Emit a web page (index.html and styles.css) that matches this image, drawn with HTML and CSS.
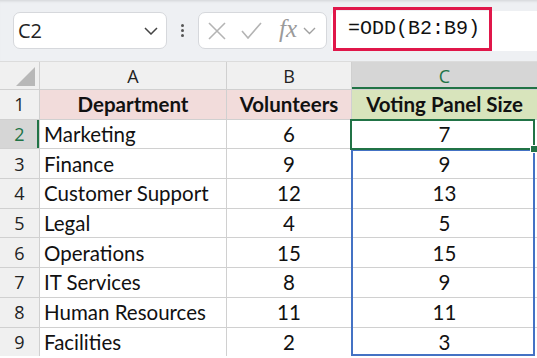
FILE: index.html
```html
<!DOCTYPE html>
<html lang="en">
<head>
  <meta charset="UTF-8" />
  <title>ODD function</title>
  <link rel="stylesheet" href="styles.css">
</head>
<body>
  <div class="toolbar">
    <div class="name-box">
      <span>C2</span>
      <svg class="chev" width="14" height="8" viewBox="0 0 14 8"><path d="M1 1 L7 7 L13 1" fill="none" stroke="#444" stroke-width="1.5"/></svg>
    </div>
    <div class="dots"><i></i><i></i><i></i></div>
    <div class="fx-box">
      <svg width="18" height="18" viewBox="0 0 18 18"><path d="M1 1 L17 17 M17 1 L1 17" stroke="#b4b4b4" stroke-width="1.6" fill="none"/></svg>
      <svg width="21" height="17" viewBox="0 0 21 17"><path d="M1 9 L7 16 L20 1" stroke="#b4b4b4" stroke-width="1.6" fill="none"/></svg>
      <span class="fx">fx</span>
      <svg width="13" height="8" viewBox="0 0 13 8"><path d="M1 1 L6.5 6.5 L12 1" fill="none" stroke="#a0a0a0" stroke-width="1.4"/></svg>
    </div>
    <div class="formula">
      <div class="formula-mark">=ODD(B2:B9)</div>
    </div>
  </div>

  <div class="sheet">
    <div class="corner"><span class="tri"></span></div>
    <div class="col-head">A</div>
    <div class="col-head">B</div>
    <div class="col-head active">C</div>

    <div class="row-head">1</div>
    <div class="cell head pink">Department</div>
    <div class="cell head pink">Volunteers</div>
    <div class="cell head green">Voting Panel Size</div>

    <div class="row-head active">2</div>
    <div class="cell">Marketing</div>
    <div class="cell num">6</div>
    <div class="cell num">7</div>

    <div class="row-head">3</div>
    <div class="cell">Finance</div>
    <div class="cell num">9</div>
    <div class="cell num">9</div>

    <div class="row-head">4</div>
    <div class="cell">Customer Support</div>
    <div class="cell num">12</div>
    <div class="cell num">13</div>

    <div class="row-head">5</div>
    <div class="cell">Legal</div>
    <div class="cell num">4</div>
    <div class="cell num">5</div>

    <div class="row-head">6</div>
    <div class="cell">Operations</div>
    <div class="cell num">15</div>
    <div class="cell num">15</div>

    <div class="row-head">7</div>
    <div class="cell">IT Services</div>
    <div class="cell num">8</div>
    <div class="cell num">9</div>

    <div class="row-head">8</div>
    <div class="cell">Human Resources</div>
    <div class="cell num">11</div>
    <div class="cell num">11</div>

    <div class="row-head">9</div>
    <div class="cell">Facilities</div>
    <div class="cell num">2</div>
    <div class="cell num">3</div>

    <!-- selection overlays -->
    <div class="sel-range"></div>
    <div class="sel-cell"><span class="handle"></span></div>
  </div>
</body>
</html>
```

FILE: styles.css
```css
body { margin: 0; background: #fff; font-family: 'Lato', 'Liberation Sans', sans-serif; overflow: hidden; }

/* Top bar */
.toolbar {
  height: 61px; background: #eef0f3; display: flex; align-items: center;
  box-shadow: inset 0 3px 3px -2px rgba(0,0,0,0.12); position: relative;
}
.name-box {
  margin-left: 13px; height: 35px; background: #fff; border: 1px solid #d6d8dc;
  border-radius: 7px; display: flex; align-items: center; justify-content: space-between;
  padding: 0 8px 0 4px; box-sizing: content-box; width: 140px;
  font-family: 'Open Sans', sans-serif; font-size: 20px; color: #222;
}
.name-box span { margin-top: -1px; }
.dots { width: 31px; display: flex; flex-direction: column; align-items: center; gap: 2px; }
.dots i { width: 3px; height: 3px; background: #555; border-radius: 50%; display: block; }
.fx-box {
  height: 35px; background: #fff; border: 1px solid #d6d8dc; border-radius: 7px;
  display: flex; align-items: center; padding-left: 9px; box-sizing: content-box; width: 118px;
}
.fx-box svg:nth-child(2) { margin-left: 15px; }
.fx { font-family: 'Liberation Serif', serif; font-style: italic; font-size: 25px; color: #9a9a9a; margin-left: 17px; margin-top: -4px; }
.fx-box svg:last-child { margin-left: 6px; }
.formula {
  margin-left: 4px; flex: 1; height: 40px; background: #fff; border-radius: 6px 0 0 6px;
  position: relative;
}
.formula-mark {
  position: absolute; left: 2px; top: -4px; height: 38px;
  border: 3px solid #e0174a; display: flex; align-items: center; padding-left: 12px;
  box-sizing: content-box; width: 141px;
  font-family: 'Liberation Mono', monospace; font-size: 20px; color: #111;
}

/* Sheet grid */
.sheet {
  display: grid; grid-template-columns: 39px 186px 124px 1fr;
  grid-template-rows: 27px repeat(9, 28.7px); gap: 1px; background: #d0d0d0;
  position: relative; border-top: 1px solid #dcdcdc;
}
.corner { background: #f0f0f0; position: relative; }
.tri {
  position: absolute; right: 4px; bottom: 3px; width: 0; height: 0;
  border-left: 19px solid transparent; border-bottom: 19px solid #b8b8b8;
}
.col-head {
  background: #f0f0f0; display: flex; align-items: center; justify-content: center;
  font-family: 'Open Sans', sans-serif; font-size: 18px; color: #222;
}
.col-head.active { background: #d6d6d6; color: #217346; box-shadow: inset 0 -2px 0 #217346; }
.row-head {
  background: #f0f0f0; display: flex; align-items: center; justify-content: center;
  font-family: 'Open Sans', sans-serif; font-size: 18px; color: #222;
}
.row-head.active { background: #d6d6d6; color: #217346; box-shadow: inset -2px 0 0 #217346; }
.cell {
  background: #fff; display: flex; align-items: center; padding-left: 4px;
  font-size: 20.5px; color: #111; white-space: nowrap; overflow: hidden;
}
.cell.num { justify-content: center; padding-left: 0; }
.cell.head { justify-content: center; padding-left: 0; font-weight: 700; }
.pink { background: #f2dcdb; }
.green { background: #d8e4bc; }

.sel-range {
  position: absolute; left: 351px; top: 87px; right: 2px; bottom: 0;
  border: 2px solid #4472c4; pointer-events: none;
}
.sel-cell {
  position: absolute; left: 350px; top: 57px; right: 2px; height: 27px;
  border: 2px solid #217346; pointer-events: none;
}
.handle {
  position: absolute; right: -5px; bottom: -5px; width: 6px; height: 6px;
  background: #217346; border: 1px solid #fff;
}
```
